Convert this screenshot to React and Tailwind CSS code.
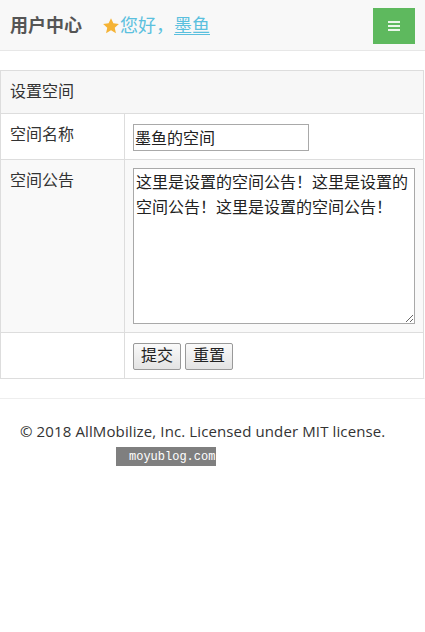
import React from "react";

const cjk = { fontFamily: '"Liberation Sans", "Noto Sans CJK SC", sans-serif' };

const App = () => {
  const notice =
    "这里是设置的空间公告！这里是设置的空间公告！这里是设置的空间公告！";

  return (
    <div className="min-h-screen bg-white text-[#333]" style={cjk}>
      {/* Header */}
      <div className="flex h-[51px] items-center border-b border-[#e7e7e7] bg-[#f8f8f8] pl-[10px] pr-[10px]">
        <div className="mt-[3px] text-[18px] font-bold text-[#555]">用户中心</div>
        <div className="ml-[20px] mt-[3px] flex items-center text-[18px] text-[#5bc0de]">
          <svg width="18" height="18" viewBox="0 0 24 24" className="mb-[2px]">
            <path
              d="M12 1.5l3.2 6.9 7.3.8-5.5 5 1.6 7.3L12 17.7l-6.6 3.8 1.6-7.3-5.5-5 7.3-.8z"
              fill="#f5b335"
            />
          </svg>
          <span>您好，</span>
          <span className="underline underline-offset-[2px]">墨鱼</span>
        </div>
        <button className="ml-auto mt-[1px] flex h-[36px] w-[42px] flex-col items-center justify-center gap-[2px] bg-[#5eb95e]">
          <span className="block h-[2px] w-[12px] bg-[#eaf6ea]" />
          <span className="block h-[2px] w-[12px] bg-[#eaf6ea]" />
          <span className="block h-[2px] w-[12px] bg-[#eaf6ea]" />
        </button>
      </div>

      {/* Settings table */}
      <div className="mt-[19px] mr-[1px] border border-[#ddd] text-[16px] leading-[1.6]">
        <div className="bg-[#f7f7f7] px-[9px] py-[8px] border-b border-[#ddd]">
          设置空间
        </div>

        <div className="flex border-b border-[#ddd]">
          <div className="w-[124px] shrink-0 border-r border-[#ddd] px-[9px] pt-[8px]">
            空间名称
          </div>
          <div className="flex-1 px-[8px] pt-[10px] pb-[8px]">
            <input
              defaultValue="墨鱼的空间"
              className="block h-[27px] w-[176px] border border-[#a9a9a9] px-[1px] text-[16px] text-[#222] outline-none"
              style={cjk}
            />
          </div>
        </div>

        <div className="flex border-b border-[#ddd] bg-[#f9f9f9]">
          <div className="w-[124px] shrink-0 border-r border-[#ddd] px-[9px] pt-[8px]">
            空间公告
          </div>
          <div className="flex-1 px-[8px] py-[8px]">
            <textarea
              defaultValue={notice}
              className="block h-[156px] w-full border border-[#a9a9a9] bg-white px-[2px] py-[1px] text-[16px] leading-[1.6] text-[#222] outline-none"
              style={cjk}
            />
          </div>
        </div>

        <div className="flex">
          <div className="w-[124px] shrink-0 border-r border-[#ddd]" />
          <div className="flex flex-1 gap-[4px] px-[8px] pt-[10px] pb-[8px]">
            <button className="h-[27px] w-[48px] rounded-[2px] border border-[#999] bg-gradient-to-b from-[#fafafa] to-[#e3e3e3] text-[16px] leading-none text-[#222]">
              提交
            </button>
            <button className="h-[27px] w-[48px] rounded-[2px] border border-[#999] bg-gradient-to-b from-[#fafafa] to-[#e3e3e3] text-[16px] leading-none text-[#222]">
              重置
            </button>
          </div>
        </div>
      </div>

      {/* Footer */}
      <div className="mt-[19px] border-t border-[#eee] pt-[21px]">
        <p
          className="pl-[20px] text-[15px] tracking-[0.12px] text-[#333]"
          style={{ fontFamily: '"Open Sans", sans-serif' }}
        >
          © 2018 AllMobilize, Inc. Licensed under MIT license.
        </p>
        <div
          className="ml-[116px] mt-[5px] flex h-[19px] w-[100px] items-center bg-[#7f7f7f] pl-[13px] text-[12px] text-white"
          style={{ fontFamily: '"Liberation Mono", monospace' }}
        >
          moyublog.com
        </div>
      </div>
    </div>
  );
};

export default App;
